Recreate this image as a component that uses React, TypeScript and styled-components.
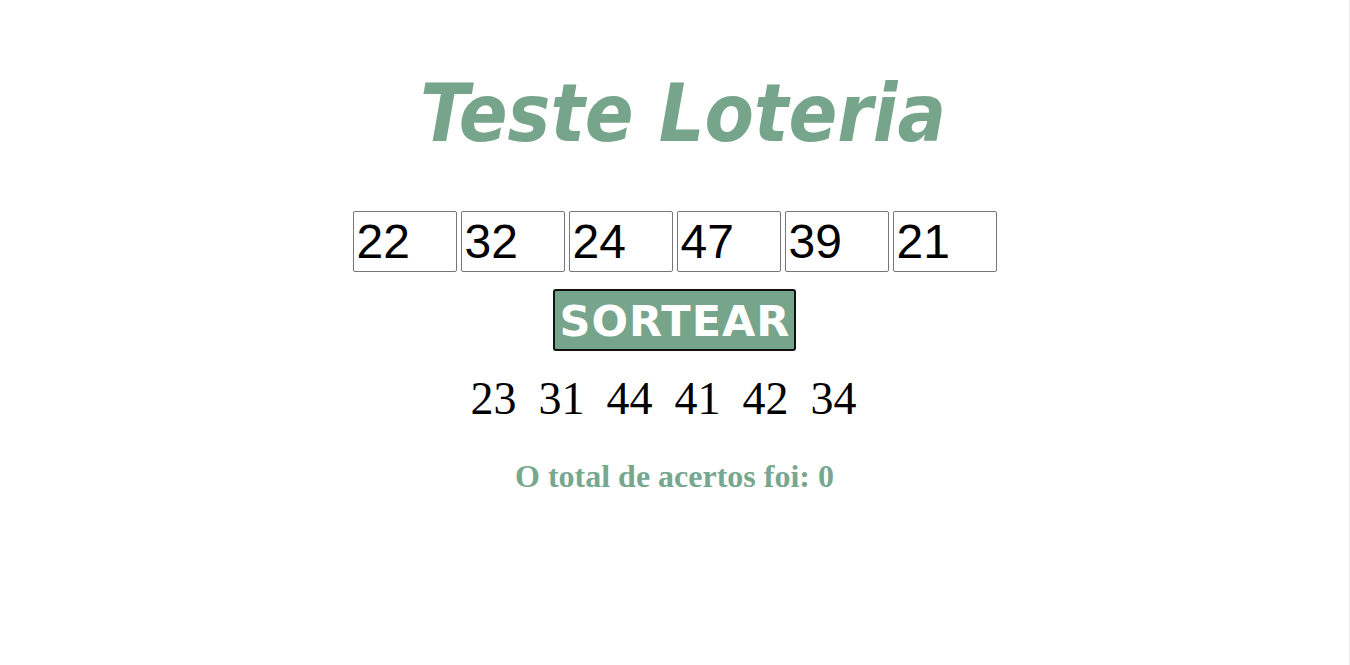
import React from "react";
import styled, { createGlobalStyle } from "styled-components";

const GlobalStyle = createGlobalStyle`
  html, body {
    margin: 0;
    padding: 0;
    background: #ffffff;
  }
`;

const Page = styled.main`
  box-sizing: border-box;
  min-height: 100vh;
  border-right: 1px solid #eeeeee;
  display: flex;
  flex-direction: column;
  align-items: center;
  padding-top: 67px;
`;

const Title = styled.h1`
  margin: 0;
  padding-left: 17px;
  font-family: "DejaVu Sans Condensed", "DejaVu Sans", Tahoma, sans-serif;
  font-stretch: semi-condensed;
  font-weight: bold;
  font-style: italic;
  font-size: 80px;
  line-height: normal;
  color: #76a58c;
`;

const InputRow = styled.div`
  display: flex;
  gap: 4px;
  margin-top: 51px;
`;

const NumberInput = styled.input`
  box-sizing: border-box;
  width: 104px;
  height: 61px;
  border: 1px solid #767676;
  border-radius: 2px;
  padding: 1px 3px;
  font-family: "Liberation Sans", Arial, sans-serif;
  font-size: 48px;
  color: #000000;
  background: #ffffff;
  outline: none;
`;

const DrawButton = styled.button`
  margin-top: 17px;
  padding: 5px 4px 3px 5px;
  border: 2px solid #111111;
  border-radius: 3px;
  background: #76a58c;
  color: #ffffff;
  font-family: "DejaVu Sans", Tahoma, sans-serif;
  font-weight: bold;
  font-size: 43px;
  letter-spacing: 1px;
  line-height: normal;
  cursor: pointer;
`;

const Drawn = styled.div`
  display: flex;
  margin-top: 21px;
  font-family: "Liberation Serif", "Times New Roman", serif;
  font-size: 46px;
  line-height: normal;
  color: #000000;
`;

const DrawnNumber = styled.span`
  margin-right: 22px;
`;

const Result = styled.h2`
  margin: 33px 0 0;
  font-family: "Liberation Serif", "Times New Roman", serif;
  font-weight: bold;
  font-size: 32px;
  line-height: normal;
  color: #78a78f;
`;

const chosen = ["22", "32", "24", "47", "39", "21"];
const drawn = ["23", "31", "44", "41", "42", "34"];

export default function App() {
  const hits = drawn.filter((n) => chosen.includes(n)).length;
  return (
    <>
      <GlobalStyle />
      <Page>
        <Title>Teste Loteria</Title>
        <InputRow>
          {chosen.map((v, i) => (
            <NumberInput key={i} type="text" defaultValue={v} />
          ))}
        </InputRow>
        <DrawButton type="button">SORTEAR</DrawButton>
        <Drawn>
          {drawn.map((n, i) => (
            <DrawnNumber key={i}>{n}</DrawnNumber>
          ))}
        </Drawn>
        <Result>O total de acertos foi: {hits}</Result>
      </Page>
    </>
  );
}
